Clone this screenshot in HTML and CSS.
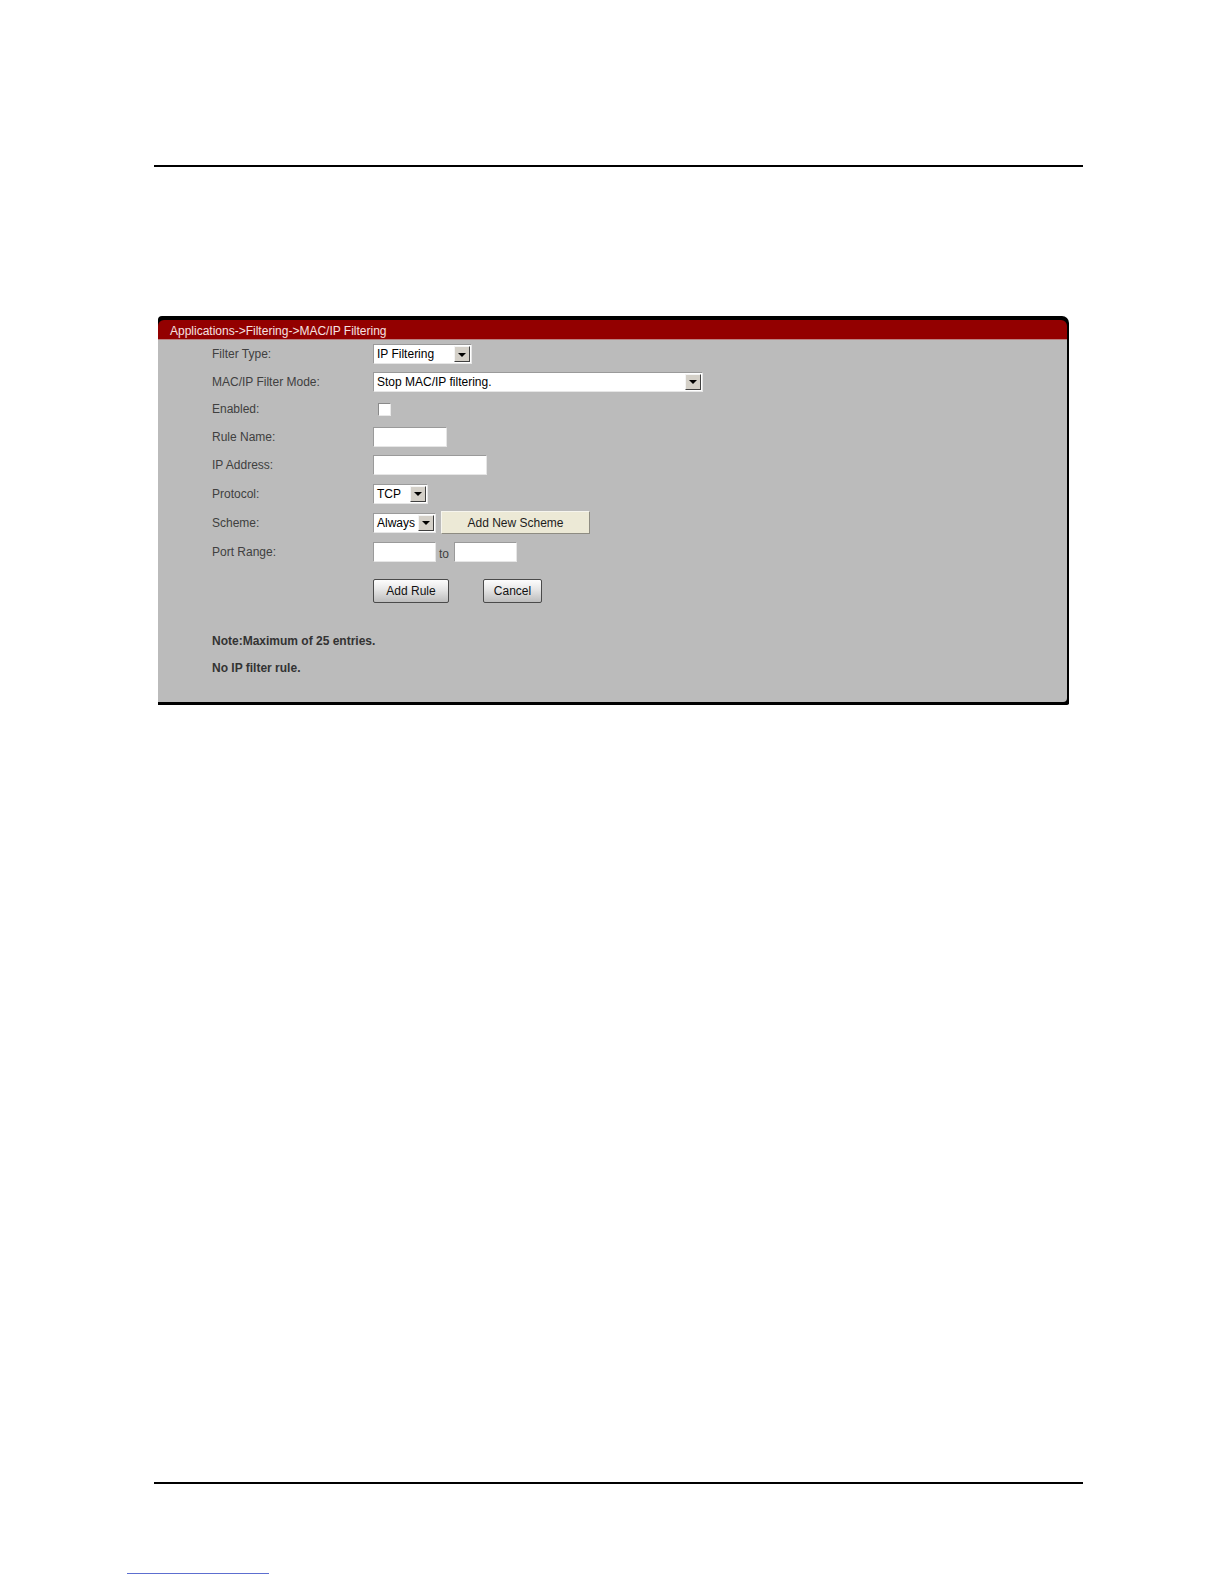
FILE: index.html
```html
<!DOCTYPE html>
<html>
<head>
<meta charset="utf-8">
<title>MAC/IP Filtering</title>
<link rel="stylesheet" href="styles.css">
</head>
<body>
<div class="page">
  <div class="rule"></div>
  <div class="panel">
    <div class="panel-head">Applications-&gt;Filtering-&gt;MAC/IP Filtering</div>
    <div class="panel-body">
      <div class="form">
        <div class="label">Filter Type:</div>
        <div class="field"><div class="sel w-type"><span class="sel-text">IP Filtering</span><span class="sel-btn"><span class="tri"></span></span></div></div>

        <div class="label">MAC/IP Filter Mode:</div>
        <div class="field"><div class="sel w-mode"><span class="sel-text">Stop MAC/IP filtering.</span><span class="sel-btn"><span class="tri"></span></span></div></div>

        <div class="label">Enabled:</div>
        <div class="field"><span class="check"></span></div>

        <div class="label">Rule Name:</div>
        <div class="field"><input class="txt w-rule" type="text"></div>

        <div class="label">IP Address:</div>
        <div class="field"><input class="txt w-ip" type="text"></div>

        <div class="label">Protocol:</div>
        <div class="field"><div class="sel w-proto"><span class="sel-text">TCP</span><span class="sel-btn"><span class="tri"></span></span></div></div>

        <div class="label">Scheme:</div>
        <div class="field"><div class="sel w-scheme"><span class="sel-text">Always</span><span class="sel-btn"><span class="tri"></span></span></div><button class="btn-scheme" type="button">Add New Scheme</button></div>

        <div class="label">Port Range:</div>
        <div class="field"><input class="txt w-port" type="text"><span class="to">to</span><input class="txt w-port" type="text"></div>
      </div>
      <div class="actions">
        <button class="btn w-add" type="button">Add Rule</button>
        <button class="btn w-cancel" type="button">Cancel</button>
      </div>
      <p class="note">Note:Maximum of 25 entries.</p>
      <p class="note note2">No IP filter rule.</p>
    </div>
  </div>
  <div class="rule bottom-rule"></div>
  <div class="link-line"></div>
</div>
</body>
</html>
```

FILE: styles.css
```css
html, body {
  margin: 0;
  padding: 0;
  background: #ffffff;
}

.page {
  padding-top: 165px;
  padding-bottom: 6px;
  font-family: "Liberation Sans", Arial, sans-serif;
  font-size: 12px;
}

.rule {
  margin-left: 154px;
  width: 929px;
  height: 2px;
  background: #000;
}

.panel {
  margin-top: 149px;
  margin-left: 158px;
  width: 909px;
  border-top: 4px solid #000;
  border-right: 2px solid #000;
  border-bottom: 3px solid #000;
  border-top-right-radius: 7px;
  border-top-left-radius: 4px;
  border-bottom-right-radius: 2px;
  background: #000;
}

.panel-head {
  height: 16px;
  padding-top: 3px;
  line-height: 17px;
  background: #930000;
  color: #f6e2e2;
  padding-left: 12px;
  border-radius: 6px 6px 0 0;
  border-bottom: 1px solid #b98080;
}

.panel-body {
  background: #bbbbbb;
  height: 362px;
  padding-left: 54px;
  box-sizing: border-box;
  border-bottom-right-radius: 4px;
}

.form {
  display: grid;
  grid-template-columns: 161px auto;
  grid-template-rows: 28px 27px 28px 28px 28px 29px 29px 30px;
  align-items: center;
}

.label {
  color: #404040;
}

.field {
  display: flex;
  align-items: center;
}

.sel {
  display: flex;
  align-items: center;
  height: 20px;
  box-sizing: border-box;
  background: #fff;
  border: 1px solid;
  border-color: #9a9a9a #e6e6e6 #e6e6e6 #9a9a9a;
}

.sel-text {
  flex: 1;
  padding-left: 3px;
  color: #000;
  white-space: nowrap;
  overflow: hidden;
}

.sel-btn {
  width: 16px;
  height: 16px;
  margin-right: 1px;
  box-sizing: border-box;
  background: #d4d0c8;
  border: 1px solid;
  border-color: #f4f4f4 #404040 #404040 #f4f4f4;
  display: flex;
  align-items: center;
  justify-content: center;
}

.tri {
  width: 0;
  height: 0;
  border-left: 4px solid transparent;
  border-right: 4px solid transparent;
  border-top: 4px solid #000;
  margin-top: 1px;
}

.w-type { width: 99px; }
.w-mode { width: 330px; }
.w-proto { width: 55px; }
.w-scheme { width: 63px; }

.check {
  display: block;
  width: 13px;
  height: 13px;
  margin-left: 5px;
  box-sizing: border-box;
  background: #fff;
  border: 1px solid;
  border-color: #8a8a8a #e8e8e8 #e8e8e8 #8a8a8a;
}

.txt {
  display: block;
  height: 20px;
  margin: 0;
  padding: 0;
  box-sizing: border-box;
  background: #fff;
  border: 1px solid;
  border-color: #9a9a9a #e6e6e6 #e6e6e6 #9a9a9a;
  font: inherit;
}

.w-rule { width: 74px; }
.w-ip { width: 114px; }
.w-port { width: 63px; }

.to {
  color: #404040;
  margin: 4px 5px 0 3px;
}

.btn-scheme {
  margin-left: 5px;
  width: 149px;
  height: 23px;
  padding: 0;
  background: #ece9d6;
  border: 1px solid;
  border-color: #f6f5ee #8e8c82 #8e8c82 #f6f5ee;
  font: inherit;
  color: #1c1c1c;
}

.actions {
  display: flex;
  margin-left: 161px;
  margin-top: 12px;
  gap: 34px;
}

.btn {
  height: 24px;
  padding: 0;
  box-sizing: border-box;
  border: 1px solid #4a4a4a;
  border-radius: 2px;
  background: linear-gradient(#fdfdfd, #e8e8e8 40%, #bdbdbd);
  font: inherit;
  color: #111;
}

.w-add { width: 76px; }
.w-cancel { width: 59px; }

.note {
  margin: 31px 0 0 0;
  font-weight: bold;
  color: #333;
  line-height: 14px;
}

.note2 {
  margin-top: 13px;
}

.bottom-rule {
  margin-top: 777px;
}

.link-line {
  margin-top: 89px;
  margin-left: 127px;
  width: 142px;
  height: 1px;
  background: #5d6fd0;
}
```
